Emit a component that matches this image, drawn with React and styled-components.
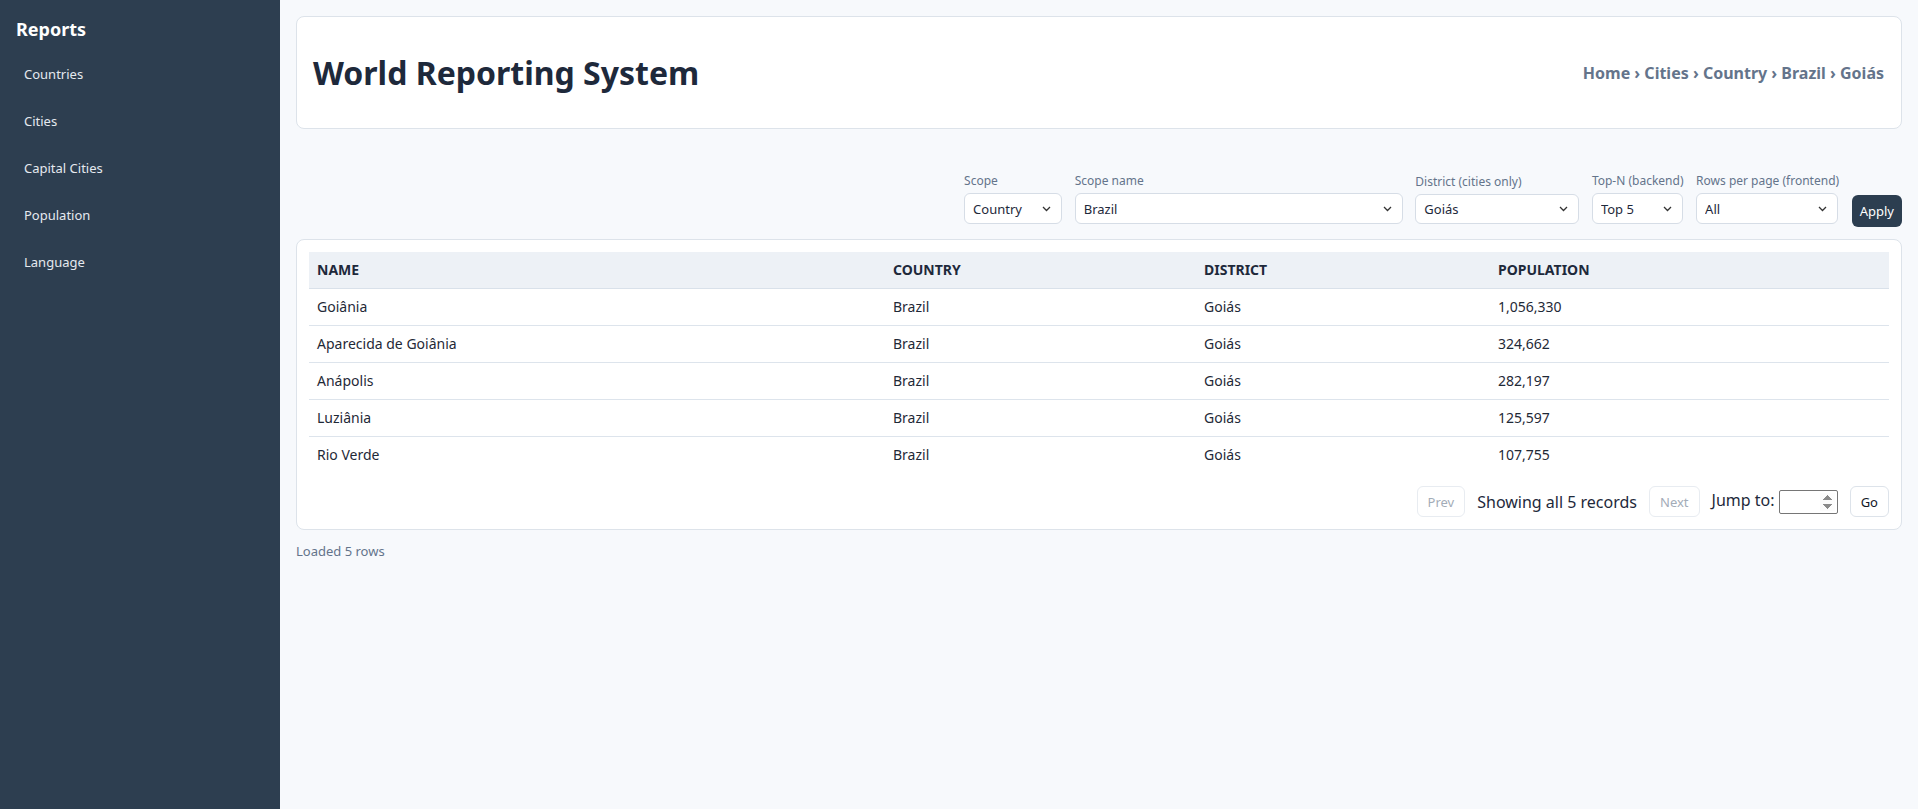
import React from "react";
import styled, { createGlobalStyle } from "styled-components";

const GlobalStyle = createGlobalStyle`
  * { box-sizing: border-box; }
  html, body {
    margin: 0;
    padding: 0;
    background: #f7f9fc;
    font-family: "Noto Sans", "Open Sans", sans-serif;
    color: #1e293b;
  }
`;

const rows = [
  { name: "Goiânia", country: "Brazil", district: "Goiás", population: 1056330 },
  { name: "Aparecida de Goiânia", country: "Brazil", district: "Goiás", population: 324662 },
  { name: "Anápolis", country: "Brazil", district: "Goiás", population: 282197 },
  { name: "Luziânia", country: "Brazil", district: "Goiás", population: 125597 },
  { name: "Rio Verde", country: "Brazil", district: "Goiás", population: 107755 },
];

const navItems = ["Countries", "Cities", "Capital Cities", "Population", "Language"];

const chevron =
  "url(\"data:image/svg+xml;utf8,<svg xmlns='http://www.w3.org/2000/svg' width='9' height='6' viewBox='0 0 9 6'><polyline points='1,1 4.5,4.5 8,1' fill='none' stroke='%23333' stroke-width='1.3'/></svg>\")";

const App = () => {
  return (
    <Layout>
      <GlobalStyle />
      <Sidebar>
        <SideTitle>Reports</SideTitle>
        <Nav>
          {navItems.map((item) => (
            <NavLink key={item} href="#">
              {item}
            </NavLink>
          ))}
        </Nav>
      </Sidebar>

      <Main>
        <HeaderCard>
          <Title>World Reporting System</Title>
          <Breadcrumb>Home › Cities › Country › Brazil › Goiás</Breadcrumb>
        </HeaderCard>

        <Toolbar>
          <Field>
            <Label>Scope</Label>
            <Select $w={98} defaultValue="Country">
              <option>Country</option>
              <option>Continent</option>
              <option>Region</option>
            </Select>
          </Field>
          <Field>
            <Label>Scope name</Label>
            <Select $w={328} defaultValue="Brazil">
              <option>Brazil</option>
            </Select>
          </Field>
          <Field>
            <Label>District (cities only)</Label>
            <Select $w={164} $h={30} defaultValue="Goiás">
              <option>Goiás</option>
            </Select>
          </Field>
          <Field>
            <Label>Top-N (backend)</Label>
            <Select $w={91} defaultValue="Top 5">
              <option>Top 5</option>
              <option>Top 10</option>
            </Select>
          </Field>
          <Field>
            <Label>Rows per page (frontend)</Label>
            <Select $w={142} defaultValue="All">
              <option>All</option>
              <option>10</option>
            </Select>
          </Field>
          <ApplyButton>Apply</ApplyButton>
        </Toolbar>

        <TableCard>
          <Table>
            <colgroup>
              <col style={{ width: 576 }} />
              <col style={{ width: 311 }} />
              <col style={{ width: 294 }} />
              <col />
            </colgroup>
            <thead>
              <tr>
                <Th>Name</Th>
                <Th>Country</Th>
                <Th>District</Th>
                <Th>Population</Th>
              </tr>
            </thead>
            <tbody>
              {rows.map((r) => (
                <Tr key={r.name}>
                  <Td>{r.name}</Td>
                  <Td>{r.country}</Td>
                  <Td>{r.district}</Td>
                  <Td>{r.population.toLocaleString("en-US")}</Td>
                </Tr>
              ))}
            </tbody>
          </Table>

          <Pager>
            <PageButton disabled>Prev</PageButton>
            <PagerText>Showing all 5 records</PagerText>
            <PageButton disabled>Next</PageButton>
            <JumpLabel>
              Jump to: <JumpInput type="number" min="1" />
            </JumpLabel>
            <PageButton>Go</PageButton>
          </Pager>
        </TableCard>

        <Status>Loaded 5 rows</Status>
      </Main>
    </Layout>
  );
};

export default App;

const Layout = styled.div`
  display: flex;
  min-height: 100vh;
`;

const Sidebar = styled.aside`
  width: 280px;
  flex-shrink: 0;
  background: #2d3e50;
  padding: 17px 16px 16px;
  color: #fff;
`;

const SideTitle = styled.h2`
  margin: 0 0 13px;
  font-size: 18px;
  line-height: 25px;
  font-weight: 700;
  color: #fff;
`;

const Nav = styled.nav`
  display: flex;
  flex-direction: column;
  gap: 8px;
`;

const NavLink = styled.a`
  display: block;
  padding: 10px 8px;
  font-size: 13px;
  line-height: 19px;
  color: #e5e9ef;
  text-decoration: none;
  border-radius: 6px;
`;

const Main = styled.main`
  flex: 1;
  min-width: 0;
  padding: 16px;
`;

const HeaderCard = styled.header`
  display: flex;
  align-items: center;
  justify-content: space-between;
  background: #fff;
  border: 1px solid #dde3ea;
  border-radius: 8px;
  padding: 36px 17px 36px 16px;
`;

const Title = styled.h1`
  margin: 0;
  font-size: 32px;
  line-height: 39px;
  font-weight: 700;
  color: #1e293b;
`;

const Breadcrumb = styled.div`
  font-size: 16px;
  font-weight: 700;
  color: #64748b;
`;

const Toolbar = styled.div`
  display: flex;
  justify-content: flex-end;
  align-items: flex-end;
  gap: 12.6px;
  margin: 44px 0 12px;
`;

const Field = styled.label`
  display: flex;
  flex-direction: column;
  gap: 4px;
  margin-bottom: 3px;
`;

const Label = styled.span`
  font-size: 12px;
  line-height: 16px;
  color: #64748b;
`;

const Select = styled.select`
  appearance: none;
  width: ${(p) => p.$w}px;
  height: ${(p) => p.$h || 31}px;
  padding: 0 24px 0 8px;
  font-family: inherit;
  font-size: 13px;
  color: #1e293b;
  background: #fff ${chevron} no-repeat right 10px center;
  border: 1px solid #d6dde6;
  border-radius: 6px;
`;

const ApplyButton = styled.button`
  height: 32px;
  padding: 0 8px;
  font-family: inherit;
  font-size: 13px;
  color: #fff;
  background: #2c3e50;
  border: none;
  border-radius: 6px;
  cursor: pointer;
`;

const TableCard = styled.section`
  background: #fff;
  border: 1px solid #dde3ea;
  border-radius: 8px;
  padding: 12px;
`;

const Table = styled.table`
  width: 100%;
  border-collapse: collapse;
  table-layout: fixed;
`;

const Th = styled.th`
  text-align: left;
  padding: 9px 8px;
  font-size: 14px;
  line-height: 18px;
  font-weight: 700;
  text-transform: uppercase;
  color: #1e293b;
  background: #edf1f6;
  border-bottom: 1px solid #d9e1ea;
`;

const Tr = styled.tr`
  &:not(:last-child) td {
    border-bottom: 1px solid #dde4ec;
  }
`;

const Td = styled.td`
  padding: 9px 8px;
  font-size: 14px;
  line-height: 18px;
  color: #1f2937;
`;

const Pager = styled.div`
  display: flex;
  justify-content: flex-end;
  align-items: center;
  gap: 12px;
  margin-top: 13px;
`;

const PageButton = styled.button`
  height: 31px;
  padding: 0 10px;
  font-family: inherit;
  font-size: 13px;
  color: #111827;
  background: #fff;
  border: 1px solid #dde3ea;
  border-radius: 6px;
  cursor: pointer;

  &:disabled {
    color: #a3acb8;
    border-color: #e8ecf1;
    cursor: default;
  }
`;

const PagerText = styled.span`
  font-size: 16px;
  color: #1e293b;
`;

const JumpLabel = styled.label`
  font-size: 16px;
  color: #1e293b;
`;

const JumpInput = styled.input`
  width: 59px;
  height: 24px;
  font-family: inherit;
  font-size: 13px;
  border: 1px solid #767676;
  border-radius: 2px;
  vertical-align: middle;

  &::-webkit-inner-spin-button,
  &::-webkit-outer-spin-button {
    opacity: 1;
  }
`;

const Status = styled.div`
  margin-top: 12px;
  font-size: 13px;
  color: #64748b;
`;
